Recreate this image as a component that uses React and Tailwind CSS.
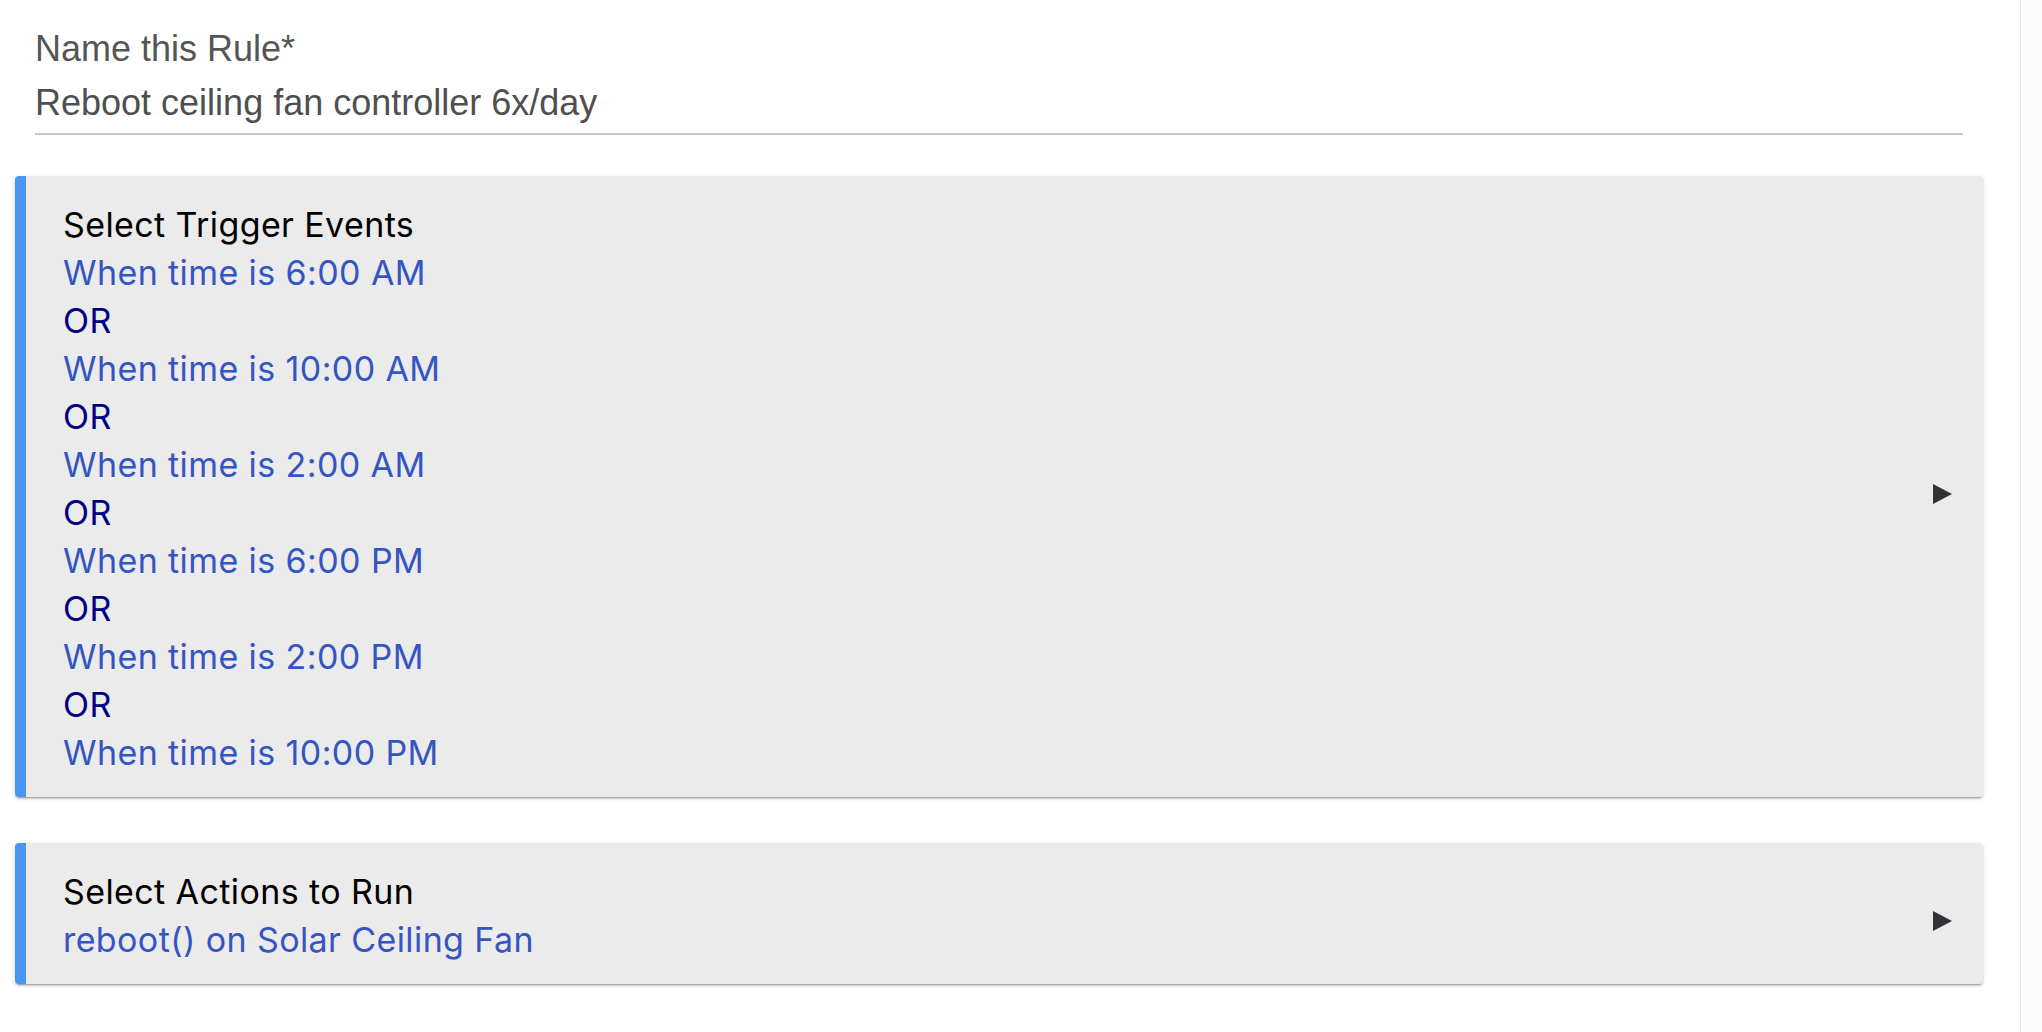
const triggers = [
  "When time is 6:00 AM",
  "When time is 10:00 AM",
  "When time is 2:00 AM",
  "When time is 6:00 PM",
  "When time is 2:00 PM",
  "When time is 10:00 PM",
];

function Arrow() {
  return (
    <svg width="19" height="20" viewBox="0 0 19 20" className="shrink-0 mt-[10px]">
      <polygon points="0,0 19,10 0,20" fill="#2f3337" />
    </svg>
  );
}

function Section({ title, children }) {
  return (
    <div className="flex items-center bg-[#ebebeb] border-l-[11px] border-[#4a96f5] rounded-[4px] pl-[37px] pr-[31px] pt-[25px] pb-[20px] shadow-[0_2px_2px_0_rgba(0,0,0,0.14),0_3px_1px_-2px_rgba(0,0,0,0.2),0_1px_5px_0_rgba(0,0,0,0.12)]">
      <div className="flex-1 text-[34px] leading-[48px] tracking-[0.4px] font-['Inter',sans-serif]">
        <div className="text-black">{title}</div>
        {children}
      </div>
      <Arrow />
    </div>
  );
}

export default function App() {
  return (
    <div className="flex min-h-[1032px] bg-white">
      <div className="flex-1">
        {/* Rule name field */}
        <div className="pl-[35px] pr-[57px] pt-[31px] font-['Liberation_Sans',Arial,sans-serif]">
          <div className="text-[36px] leading-[36px] text-[#555555]">Name this Rule*</div>
          <div className="mt-[18px] text-[36px] leading-[36px] text-[#4f4f4f]">Reboot ceiling fan controller 6x/day</div>
          <div className="mt-[12px] h-[2px] bg-[#c9c9c9]" />
        </div>

        <div className="ml-[15px] mr-[37px] mt-[41px] flex flex-col gap-[46px]">
          <Section title="Select Trigger Events">
            {triggers.map((t, i) => (
              <div key={t}>
                {i > 0 && <div className="text-[#000080]">OR</div>}
                <div className="text-[#3555c2]">{t}</div>
              </div>
            ))}
          </Section>

          <Section title="Select Actions to Run">
            <div className="text-[#3555c2]">reboot() on Solar Ceiling Fan</div>
          </Section>
        </div>
      </div>

      {/* scrollbar track */}
      <div className="w-[22px] border-l border-[#e3e3e3] bg-[#fafafa]" />
    </div>
  );
}
